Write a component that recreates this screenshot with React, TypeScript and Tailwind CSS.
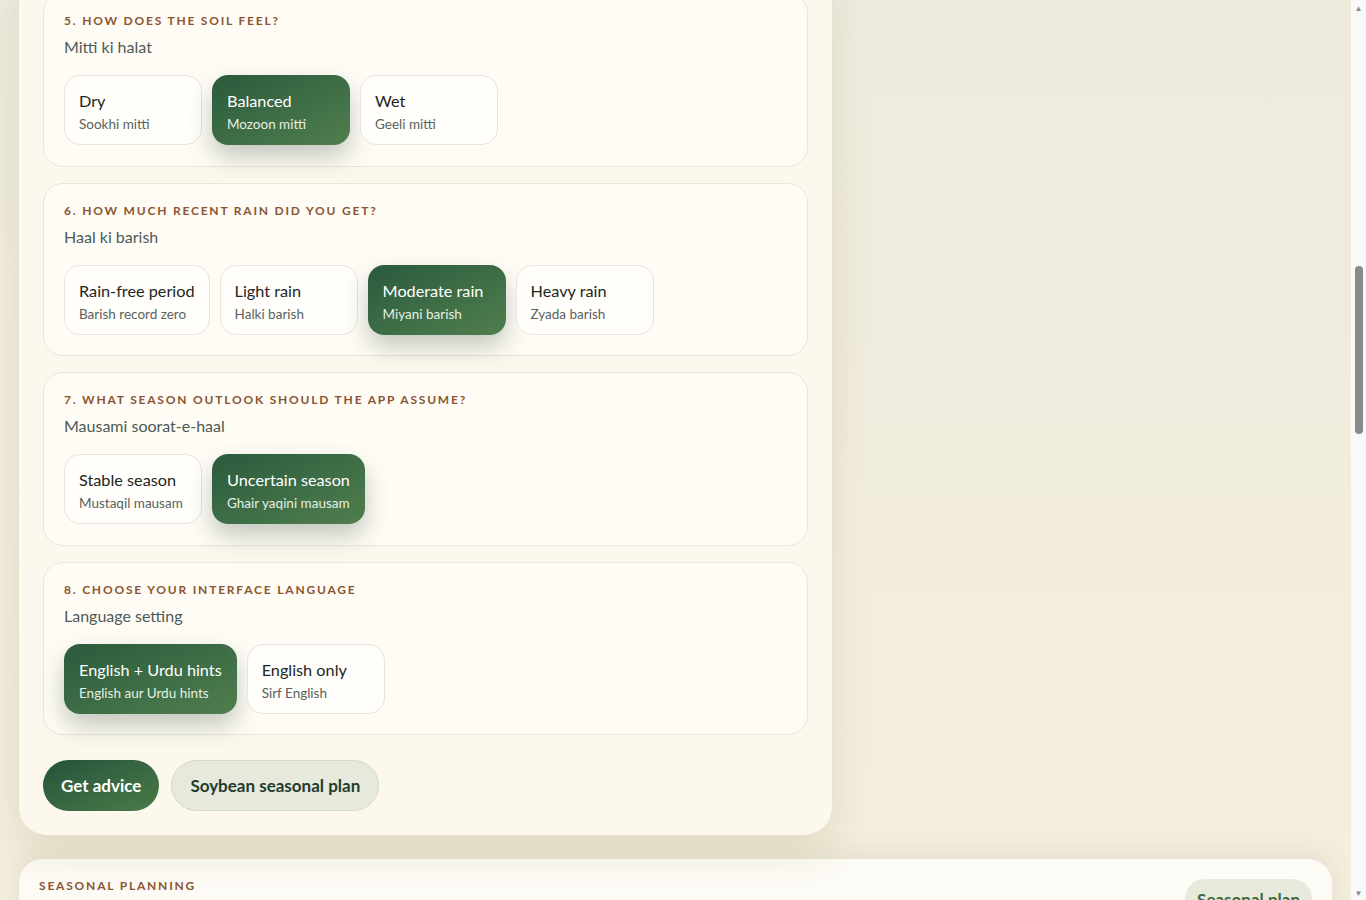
import React from "react";

type Option = { title: string; hint: string; selected?: boolean };

interface Question {
  label: string;
  subtitle: string;
  options: Option[];
}

const questions: Question[] = [
  {
    label: "5. How does the soil feel?",
    subtitle: "Mitti ki halat",
    options: [
      { title: "Dry", hint: "Sookhi mitti" },
      { title: "Balanced", hint: "Mozoon mitti", selected: true },
      { title: "Wet", hint: "Geeli mitti" },
    ],
  },
  {
    label: "6. How much recent rain did you get?",
    subtitle: "Haal ki barish",
    options: [
      { title: "Rain-free period", hint: "Barish record zero" },
      { title: "Light rain", hint: "Halki barish" },
      { title: "Moderate rain", hint: "Miyani barish", selected: true },
      { title: "Heavy rain", hint: "Zyada barish" },
    ],
  },
  {
    label: "7. What season outlook should the app assume?",
    subtitle: "Mausami soorat-e-haal",
    options: [
      { title: "Stable season", hint: "Mustaqil mausam" },
      { title: "Uncertain season", hint: "Ghair yaqini mausam", selected: true },
    ],
  },
  {
    label: "8. Choose your interface language",
    subtitle: "Language setting",
    options: [
      { title: "English + Urdu hints", hint: "English aur Urdu hints", selected: true },
      { title: "English only", hint: "Sirf English" },
    ],
  },
];

function OptionCard({ option }: { option: Option }) {
  return (
    <button
      className={
        option.selected
          ? "min-w-[138px] h-[70px] rounded-2xl px-[15px] pt-[14px] flex flex-col text-left bg-gradient-to-br from-[#2b5a3d] to-[#4f7f4e] text-white shadow-[0_12px_24px_rgba(40,70,45,0.28)]"
          : "min-w-[138px] h-[70px] rounded-2xl px-[14px] pt-[13px] flex flex-col text-left bg-[#fffefa] border border-[#e9e5dc] text-[#1d2622]"
      }
    >
      <span className="text-[16.25px] leading-[24px]">{option.title}</span>
      <span
        className={
          option.selected
            ? "mt-[2px] text-[13.5px] leading-[18px] text-[#e6efe4]"
            : "mt-[2px] text-[13.5px] leading-[18px] text-[#59625e]"
        }
      >
        {option.hint}
      </span>
    </button>
  );
}

function QuestionBlock({ q }: { q: Question }) {
  return (
    <section className="h-[173.5px] rounded-[20px] border border-[#ebe6db] bg-[#fffcf6] px-5 pt-[20px]">
      <div className="text-[12px] font-bold uppercase tracking-[0.15em] text-[#8a5530] leading-[14px]">{q.label}</div>
      <div className="mt-[8px] text-[16px] leading-[22px] text-[#4d5a56]">{q.subtitle}</div>
      <div className="mt-[17px] flex gap-[10px]">
        {q.options.map((o) => (
          <OptionCard key={o.title} option={o} />
        ))}
      </div>
    </section>
  );
}

export default function App() {
  return (
    <div className="h-[900px] overflow-hidden flex bg-[#f3eedf] font-['Lato','Noto_Sans',sans-serif]">
      <div className="flex-1 px-[19px] bg-gradient-to-b from-[#eeebdd] to-[#f4eedd]">
        <div className="grid grid-cols-[813px_1fr]">
          <div className="-mt-[31px] rounded-[28px] bg-[#fcf8ee] px-6 pt-6 pb-6 shadow-[0_18px_40px_rgba(120,100,60,0.14)]">
            <div className="flex flex-col gap-4">
              {questions.map((q) => (
                <QuestionBlock key={q.label} q={q} />
              ))}
            </div>
            <div className="mt-[25px] flex gap-3">
              <button className="h-[51px] px-[18px] rounded-full bg-gradient-to-br from-[#24543a] to-[#4a7b48] text-white font-bold text-[17px]">
                Get advice
              </button>
              <button className="h-[51px] px-[18px] rounded-full bg-[#e8e9dd] border border-[#d5d8c6] text-[#1f3d2e] font-bold text-[17px]">
                Soybean seasonal plan
              </button>
            </div>
          </div>
          <div />
        </div>

        <div className="mt-6 rounded-t-[24px] bg-[#fdfbf5] px-5 pt-5 h-[120px] flex justify-between shadow-[0_-6px_24px_rgba(120,100,60,0.10)]">
          <div className="pt-[1px] leading-[12px] text-[12px] font-bold uppercase tracking-[0.15em] text-[#8a5530]">Seasonal planning</div>
          <div className="h-[40px] rounded-full bg-[#e6e9dc] px-3 pt-[8px] text-[17px] font-bold text-[#3f6a3c]">Seasonal plan</div>
        </div>
      </div>

      <div className="w-[15px] bg-[#f9f9f9] flex flex-col items-center">
        <div className="h-[15px] flex items-center justify-center text-[8px] text-[#8a8a8a]">▲</div>
        <div className="flex-1 pt-[251px]">
          <div className="w-[8px] h-[168px] rounded-full bg-[#8a8a8a]" />
        </div>
        <div className="h-[15px] flex items-center justify-center text-[8px] text-[#8a8a8a]">▼</div>
      </div>
    </div>
  );
}
